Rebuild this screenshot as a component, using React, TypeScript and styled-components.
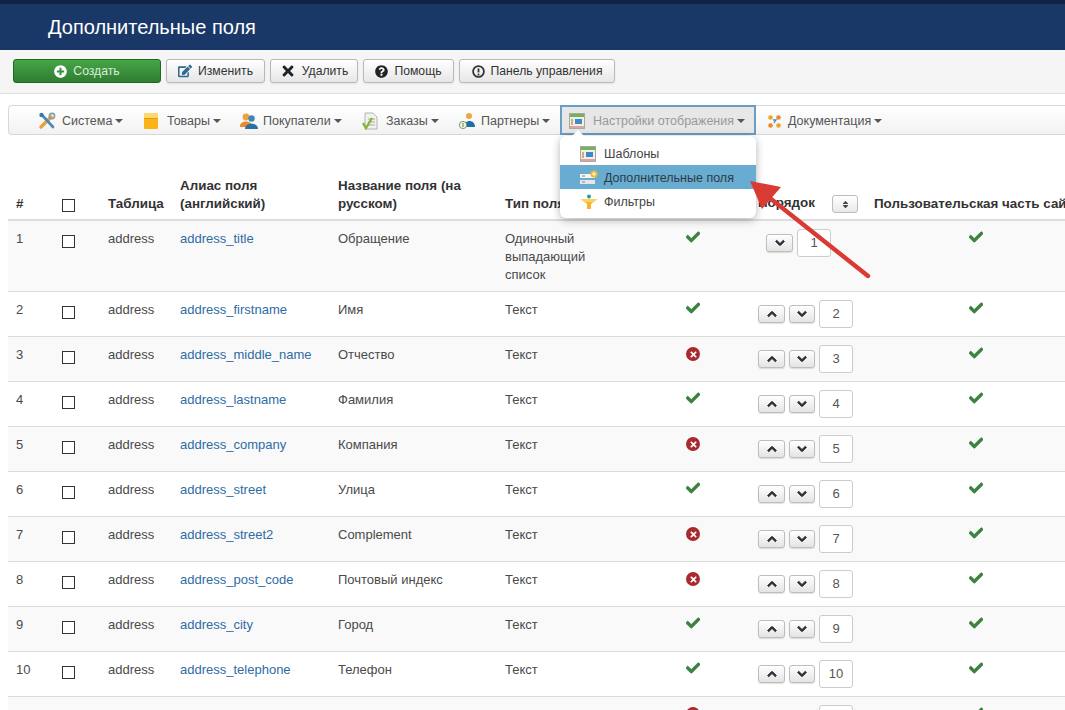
import React from "react";
import styled, { createGlobalStyle } from "styled-components";
import { FaCheck, FaChevronDown, FaChevronUp, FaTimes, FaSort, FaPlusCircle, FaQuestionCircle, FaEdit } from "react-icons/fa";

const GlobalStyle = createGlobalStyle`
  html, body {
    margin: 0;
    padding: 0;
    width: 1065px;
    height: 710px;
    overflow: hidden;
    background: #fff;
    font-family: "Liberation Sans", Arial, sans-serif;
    font-size: 13px;
    color: #333;
  }
`;

const Page = styled.div`
  position: relative;
  width: 1065px;
  height: 710px;
  overflow: hidden;
`;

const TitleBar = styled.header`
  height: 50px;
  box-sizing: border-box;
  background: #1a3867;
  border-top: 4px solid #0f2444;
  display: flex;
  align-items: center;
  padding-left: 48px;
`;

const Title = styled.h1`
  margin: 0;
  color: #fff;
  font-size: 20px;
  font-weight: 400;
  line-height: 46px;
`;

const Subhead = styled.div`
  height: 44px;
  box-sizing: border-box;
  background: #f5f5f5;
  border-bottom: 1px solid #dedede;
  display: flex;
  align-items: flex-start;
  padding: 9px 0 0 13px;
  gap: 5px;
`;

const ToolButton = styled.button<{ $primary?: boolean; $width: number }>`
  width: ${(p) => p.$width}px;
  height: 24px;
  display: flex;
  align-items: center;
  justify-content: center;
  gap: 6px;
  padding: 0;
  border-radius: 3px;
  font: 12.2px "Liberation Sans", Arial, sans-serif;
  color: ${(p) => (p.$primary ? "#dcebd8" : "#333")};
  border: 1px solid ${(p) => (p.$primary ? "#1d6b1d" : "#b9b9b9")};
  background: ${(p) =>
    p.$primary
      ? "linear-gradient(#46a546, #2f7d32)"
      : "linear-gradient(#fff, #e6e6e6)"};
  box-shadow: ${(p) => (p.$primary ? "none" : "0 1px 2px rgba(0,0,0,.08)")};
`;

const NavBar = styled.nav`
  height: 30px;
  margin: 11px 0 0 8px;
  background: linear-gradient(#fff, #f2f2f2);
  border: 1px solid #d8d8d8;
  border-right: none;
  border-radius: 4px 0 0 4px;
  display: flex;
  align-items: center;
  padding-left: 29px;
  box-sizing: border-box;
`;

const NavItem = styled.div<{ $open?: boolean; $width: number; $gap?: number }>`
  width: ${(p) => p.$width}px;
  margin-left: ${(p) => p.$gap ?? 0}px;
  flex-shrink: 0;
  box-sizing: border-box;
  height: ${(p) => (p.$open ? "30px" : "auto")};
  display: flex;
  align-items: center;
  font-size: 12.5px;
  color: ${(p) => (p.$open ? "#999" : "#555")};
  background: ${(p) => (p.$open ? "#e7e7e7" : "transparent")};
  border: ${(p) => (p.$open ? "2px solid #6b9cc4" : "none")};
  padding: 2px 0 0 ${(p) => (p.$open ? "7px" : "0")};
`;

const IconSlot = styled.span<{ $width?: number }>`
  width: ${(p) => p.$width ?? 24}px;
  flex-shrink: 0;
  display: flex;
  align-items: center;
`;

const Caret = styled.span`
  width: 0;
  height: 0;
  margin-left: 3px;
  border-left: 4px solid transparent;
  border-right: 4px solid transparent;
  border-top: 4px solid #555;
`;

const Menu = styled.div`
  position: absolute;
  left: 560px;
  top: 136px;
  width: 196px;
  height: 82px;
  padding-top: 5px;
  box-sizing: border-box;
  background: #fff;
  border-radius: 6px;
  box-shadow: 0 2px 8px rgba(0, 0, 0, 0.3);
  z-index: 2;
  &::before {
    content: "";
    position: absolute;
    left: 12px;
    top: -6px;
    border-left: 6px solid transparent;
    border-right: 6px solid transparent;
    border-bottom: 6px solid #fff;
  }
`;

const MenuItem = styled.div<{ $active?: boolean }>`
  height: 24px;
  box-sizing: border-box;
  display: flex;
  align-items: center;
  padding: 2px 0 0 20px;
  font-size: 12.5px;
  color: ${(p) => (p.$active ? "#2f3a44" : "#444")};
  background: ${(p) => (p.$active ? "#68acd1" : "transparent")};
`;

const Table = styled.table`
  margin: 32px 0 0 8px;
  width: 1077px;
  table-layout: fixed;
  border-collapse: collapse;
`;

const HeadCell = styled.th`
  padding: 10px 8px 6px;
  text-align: left;
  vertical-align: bottom;
  font-size: 13.4px;
  line-height: 18px;
  font-weight: 700;
  color: #333;
  border-bottom: 2px solid #ddd;
`;

const NoWrap = styled.span`
  white-space: nowrap;
`;

const Row = styled.tr<{ $odd: boolean }>`
  background: ${(p) => (p.$odd ? "#f9f9f9" : "#fff")};
`;

const Cell = styled.td<{ $center?: boolean }>`
  padding: 9px 8px 7px;
  vertical-align: top;
  font-size: 13px;
  line-height: 18px;
  color: #4a4a4a;
  border-bottom: 1px solid #ddd;
  text-align: ${(p) => (p.$center ? "center" : "left")};
`;

const TypeText = styled.span`
  display: block;
  max-width: 100px;
`;

const Alias = styled.a`
  color: #2f6ba5;
`;

const Box = styled.span`
  display: block;
  width: 11px;
  height: 11px;
  margin-top: 5px;
  border: 1px solid #333;
  background: #fff;
`;

const HeadBox = styled(Box)`
  margin: 4px 0 1px;
`;

const OrderWrap = styled.div<{ $first?: boolean }>`
  display: flex;
  align-items: flex-start;
  gap: 4px;
  margin: -1px 0 1px;
  padding-left: ${(p) => (p.$first ? "8px" : "0")};
`;

const ArrowButton = styled.span<{ $up?: boolean }>`
  width: ${(p) => (p.$up ? "27px" : "26px")};
  height: 18px;
  box-sizing: border-box;
  margin-top: 5px;
  display: flex;
  align-items: center;
  justify-content: center;
  font-size: 10px;
  color: #2a2f38;
  border: 1px solid #bdbdbd;
  border-radius: 3px;
  background: linear-gradient(#fff, #e4e4e4);
  box-shadow: 0 1px 1px rgba(0, 0, 0, 0.12);
  svg {
    stroke: currentColor;
    stroke-width: 50;
  }
`;

const OrderInput = styled.span`
  width: 34px;
  height: 28px;
  box-sizing: border-box;
  display: flex;
  align-items: center;
  justify-content: center;
  font-size: 13px;
  color: #555;
  background: #fff;
  border: 1px solid #ccc;
  border-radius: 3px;
`;

const SortButton = styled.span`
  display: inline-flex;
  align-items: center;
  justify-content: center;
  width: 26px;
  height: 18px;
  box-sizing: border-box;
  margin-left: 17px;
  vertical-align: -2px;
  font-size: 9px;
  color: #444;
  border: 1px solid #bdbdbd;
  border-radius: 3px;
  background: linear-gradient(#fff, #e8e8e8);
`;

const Ok = styled(FaCheck)`
  color: #3d8140;
  font-size: 14px;
  stroke: currentColor;
  stroke-width: 30;
`;

const Bad = styled.span`
  display: inline-flex;
  align-items: center;
  justify-content: center;
  width: 14px;
  height: 14px;
  margin-top: 1px;
  vertical-align: top;
  border-radius: 50%;
  background: #a62a2e;
  color: #fff;
  font-size: 9px;
`;

const PointerArrow = styled.svg`
  position: absolute;
  left: 740px;
  top: 170px;
  z-index: 3;
`;

const IconTools = () => (
  <svg width="18" height="18" viewBox="0 0 18 18">
    <path d="M3 15 L13 5" stroke="#e8a33c" strokeWidth="3.5" strokeLinecap="round" />
    <path d="M4 3 L15 15" stroke="#4a8ab5" strokeWidth="2.6" strokeLinecap="round" />
    <circle cx="14" cy="4" r="2.6" fill="none" stroke="#8a9aa6" strokeWidth="1.6" />
    <circle cx="3.5" cy="3" r="2.2" fill="#3c7aa6" />
  </svg>
);

const IconBox = () => (
  <svg width="16" height="18" viewBox="0 0 16 18">
    <rect x="1" y="1" width="14" height="16" rx="1" fill="#fbb417" />
    <rect x="1" y="1" width="14" height="5" fill="#ffd772" />
    <rect x="1" y="6" width="14" height="1" fill="#e79a0c" />
  </svg>
);

const IconUsers = () => (
  <svg width="18" height="18" viewBox="0 0 18 18">
    <circle cx="6" cy="5" r="3.4" fill="#f0a13a" />
    <path d="M0 14 C0 8 12 8 12 14 V15 H0 Z" fill="#e8892b" />
    <circle cx="11.5" cy="6.5" r="3.2" fill="#3f86b8" />
    <path d="M5 17 C5 10 18 10 18 17 Z" fill="#2c6ea6" />
  </svg>
);

const IconOrders = () => (
  <svg width="16" height="18" viewBox="0 0 16 18">
    <path d="M3 1 H11 L15 5 V17 H3 Z" fill="#f1f1ee" stroke="#b5b5ad" />
    <path d="M6 7 H13 M6 10 H13 M6 13 H13" stroke="#a9a9a3" />
    <path d="M1 11 L4 16 L10 6" fill="none" stroke="#86b53f" strokeWidth="2.4" />
  </svg>
);

const IconPartners = () => (
  <svg width="18" height="18" viewBox="0 0 18 18">
    <circle cx="11" cy="4" r="3" fill="#e9a93d" />
    <path d="M6 15 C6 7 17 7 17 15 Z" fill="#1e6fa8" />
    <circle cx="5" cy="13" r="3.6" fill="#f4f4ee" stroke="#7fa05c" />
    <path d="M5 11 V15" stroke="#5e8a3a" />
  </svg>
);

const IconWindow = () => (
  <svg width="16" height="16" viewBox="0 0 16 16">
    <rect x="0.5" y="0.5" width="15" height="15" fill="#f0efe8" stroke="#a8a89e" />
    <rect x="1" y="1" width="14" height="3" fill="#74b35c" />
    <rect x="1" y="13" width="14" height="2" fill="#dba5a5" />
    <rect x="6" y="6" width="7" height="5" fill="#3f8ac6" />
    <rect x="2" y="6" width="2" height="6" fill="#dca77c" />
  </svg>
);

const IconFields = () => (
  <svg width="18" height="16" viewBox="0 0 18 16">
    <rect x="0" y="4" width="15" height="4" fill="#f4f4f4" />
    <rect x="0" y="10" width="15" height="4" fill="#e7e7e7" />
    <path d="M2 6 H5 M2 12 H5" stroke="#888" />
    <circle cx="14" cy="4" r="3.6" fill="#f3b62f" />
    <path d="M12 4 H16 M14 2 V6" stroke="#fff" />
  </svg>
);

const IconFilter = () => (
  <svg width="18" height="16" viewBox="0 0 18 16">
    <path d="M1 5 H17 L11 10 V15 H7 V10 Z" fill="#f5b62b" />
    <path d="M1 5 H17 L14 8 H4 Z" fill="#fbd25c" />
    <circle cx="9" cy="2.5" r="2" fill="#2b9a9a" />
  </svg>
);

const IconDocs = () => (
  <svg width="15" height="15" viewBox="0 0 15 15">
    <circle cx="3.5" cy="3.5" r="2.3" fill="#eea32c" />
    <circle cx="11.5" cy="3.5" r="2.3" fill="#e8892b" />
    <circle cx="3.5" cy="11.5" r="2.3" fill="#e8892b" />
    <circle cx="11.5" cy="11.5" r="2.3" fill="#eea32c" />
    <path d="M6 6 H9 L7 9" fill="none" stroke="#4f88b8" strokeWidth="1.3" />
  </svg>
);

const DashboardIcon = () => (
  <svg width="13" height="13" viewBox="0 0 13 13">
    <circle cx="6.5" cy="6.5" r="5.4" fill="none" stroke="#333" strokeWidth="1.8" />
    <path d="M6.5 3.4 V7.4" stroke="#333" strokeWidth="1.8" />
    <circle cx="6.5" cy="9.4" r="1" fill="#333" />
  </svg>
);

const navItems = [
  { label: "Система", icon: <IconTools />, width: 105, slot: 24 },
  { label: "Товары", icon: <IconBox />, width: 97, slot: 24 },
  { label: "Покупатели", icon: <IconUsers />, width: 122, slot: 23 },
  { label: "Заказы", icon: <IconOrders />, width: 96, slot: 24 },
  { label: "Партнеры", icon: <IconPartners />, width: 102, slot: 23 },
  { label: "Настройки отображения", icon: <IconWindow />, width: 196, slot: 24, open: true },
  { label: "Документация", icon: <IconDocs />, width: 140, slot: 21, gap: 11 },
];

const rows = [
  ["address_title", "Обращение", "Одиночный выпадающий список", true],
  ["address_firstname", "Имя", "Текст", true],
  ["address_middle_name", "Отчество", "Текст", false],
  ["address_lastname", "Фамилия", "Текст", true],
  ["address_company", "Компания", "Текст", false],
  ["address_street", "Улица", "Текст", true],
  ["address_street2", "Complement", "Текст", false],
  ["address_post_code", "Почтовый индекс", "Текст", false],
  ["address_city", "Город", "Текст", true],
  ["address_telephone", "Телефон", "Текст", true],
  ["address_telephone2", "Телефон", "Текст", false],
] as const;

const columns = [46, 46, 72, 158, 167, 139, 114, 116, 219];

const App = () => (
  <Page>
    <GlobalStyle />
    <TitleBar>
      <Title>Дополнительные поля</Title>
    </TitleBar>
    <Subhead>
      <ToolButton $primary $width={148}>
        <FaPlusCircle size={13} color="#fff" /> Создать
      </ToolButton>
      <ToolButton $width={99}>
        <FaEdit size={14} color="#2f6a8f" /> Изменить
      </ToolButton>
      <ToolButton $width={88}>
        <FaTimes size={16} color="#222" /> Удалить
      </ToolButton>
      <ToolButton $width={91}>
        <FaQuestionCircle size={13} color="#222" /> Помощь
      </ToolButton>
      <ToolButton $width={156}>
        <DashboardIcon /> Панель управления
      </ToolButton>
    </Subhead>
    <NavBar>
      {navItems.map((item) => (
        <NavItem key={item.label} $open={item.open} $width={item.width} $gap={item.gap}>
          <IconSlot $width={item.slot}>{item.icon}</IconSlot>
          {item.label}
          <Caret />
        </NavItem>
      ))}
    </NavBar>
    <Menu>
      <MenuItem>
        <IconSlot>
          <IconWindow />
        </IconSlot>
        Шаблоны
      </MenuItem>
      <MenuItem $active>
        <IconSlot>
          <IconFields />
        </IconSlot>
        Дополнительные поля
      </MenuItem>
      <MenuItem>
        <IconSlot>
          <IconFilter />
        </IconSlot>
        Фильтры
      </MenuItem>
    </Menu>
    <PointerArrow width="140" height="115" viewBox="0 0 140 115">
      <path d="M128 106 L26 25" stroke="#d93a33" strokeWidth="4.4" strokeLinecap="round" />
      <path d="M10 11 L41 17 L22 39 Z" fill="#d93a33" />
    </PointerArrow>
    <Table>
      <colgroup>
        {columns.map((w, i) => (
          <col key={i} width={w} />
        ))}
      </colgroup>
      <thead>
        <tr>
          <HeadCell>#</HeadCell>
          <HeadCell>
            <HeadBox />
          </HeadCell>
          <HeadCell>Таблица</HeadCell>
          <HeadCell>Алиас поля (английский)</HeadCell>
          <HeadCell>Название поля (на русском)</HeadCell>
          <HeadCell>Тип поля</HeadCell>
          <HeadCell />
          <HeadCell>
            <NoWrap>
              Порядок
              <SortButton>
                <FaSort />
              </SortButton>
            </NoWrap>
          </HeadCell>
          <HeadCell>
            <NoWrap>Пользовательская часть сайта</NoWrap>
          </HeadCell>
        </tr>
      </thead>
      <tbody>
        {rows.map(([alias, name, type, on], i) => (
          <Row key={alias} $odd={i % 2 === 0}>
            <Cell>{i + 1}</Cell>
            <Cell>
              <Box />
            </Cell>
            <Cell>address</Cell>
            <Cell>
              <Alias>{alias}</Alias>
            </Cell>
            <Cell>{name}</Cell>
            <Cell>
              <TypeText>{type}</TypeText>
            </Cell>
            <Cell $center>
              {on ? (
                <Ok />
              ) : (
                <Bad>
                  <FaTimes />
                </Bad>
              )}
            </Cell>
            <Cell>
              <OrderWrap $first={i === 0}>
                {i > 0 && (
                  <ArrowButton $up>
                    <FaChevronUp />
                  </ArrowButton>
                )}
                <ArrowButton $up={i === 0}>
                  <FaChevronDown />
                </ArrowButton>
                <OrderInput>{i + 1}</OrderInput>
              </OrderWrap>
            </Cell>
            <Cell $center>
              <Ok />
            </Cell>
          </Row>
        ))}
      </tbody>
    </Table>
  </Page>
);

export default App;
